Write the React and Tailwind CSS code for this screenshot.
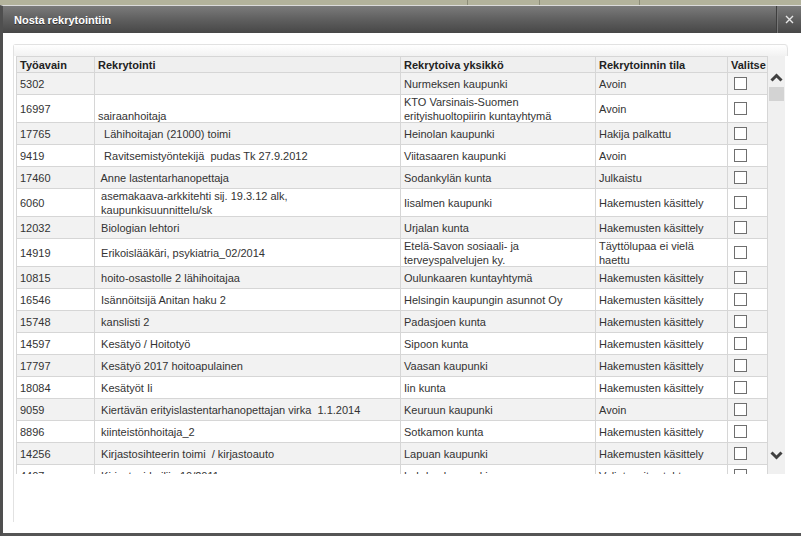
const rows = [
  ["5302", "", "Nurmeksen kaupunki", "Avoin"],
  ["16997", "\nsairaanhoitaja", "KTO Varsinais-Suomen\nerityishuoltopiirin kuntayhtymä", "Avoin", true],
  ["17765", "  Lähihoitajan (21000) toimi", "Heinolan kaupunki", "Hakija palkattu"],
  ["9419", "  Ravitsemistyöntekijä  pudas Tk 27.9.2012", "Viitasaaren kaupunki", "Avoin"],
  ["17460", " Anne lastentarhanopettaja", "Sodankylän kunta", "Julkaistu"],
  ["6060", " asemakaava-arkkitehti sij. 19.3.12 alk,\n kaupunkisuunnittelu/sk", "Iisalmen kaupunki", "Hakemusten käsittely", true],
  ["12032", " Biologian lehtori", "Urjalan kunta", "Hakemusten käsittely"],
  ["14919", " Erikoislääkäri, psykiatria_02/2014", "Etelä-Savon sosiaali- ja\nterveyspalvelujen ky.", "Täyttölupaa ei vielä\nhaettu", true],
  ["10815", " hoito-osastolle 2 lähihoitajaa", "Oulunkaaren kuntayhtymä", "Hakemusten käsittely"],
  ["16546", " Isännöitsijä Anitan haku 2", "Helsingin kaupungin asunnot Oy", "Hakemusten käsittely"],
  ["15748", " kanslisti 2", "Padasjoen kunta", "Hakemusten käsittely"],
  ["14597", " Kesätyö / Hoitotyö", "Sipoon kunta", "Hakemusten käsittely"],
  ["17797", " Kesätyö 2017 hoitoapulainen", "Vaasan kaupunki", "Hakemusten käsittely"],
  ["18084", " Kesätyöt Ii", "Iin kunta", "Hakemusten käsittely"],
  ["9059", " Kiertävän erityislastentarhanopettajan virka  1.1.2014", "Keuruun kaupunki", "Avoin"],
  ["8896", " kiinteistönhoitaja_2", "Sotkamon kunta", "Hakemusten käsittely"],
  ["14256", " Kirjastosihteerin toimi  / kirjastoauto", "Lapuan kaupunki", "Hakemusten käsittely"],
  ["4407", " Kirjastovirkailija 10/2011", "Lohden kaupunki", "Valintaesitys tehty"],
];

function Cell({ w, children, last }) {
  return (
    <div className={`${w} shrink-0 flex items-center pl-[3px] whitespace-pre overflow-hidden ${last ? "" : "border-r border-[#d6d6d6]"}`}>
      {children}
    </div>
  );
}

function Chevron({ up }) {
  return (
    <svg width="13" height="9" viewBox="0 0 13 9">
      <polyline
        points={up ? "1.5,7.5 6.5,2.5 11.5,7.5" : "1.5,1.5 6.5,6.5 11.5,1.5"}
        fill="none"
        stroke="#404040"
        strokeWidth="3"
      />
    </svg>
  );
}

export default function App() {
  return (
    <div className="w-[801px] h-[536px] overflow-hidden bg-[#b3b39c] font-['Liberation_Sans',Arial,sans-serif] text-[11px] leading-[14px] text-[#333]">
      {/* page behind the dialog */}
      <div className="h-[5px] flex">
        <div className="w-[468px] border-r border-[#8c8c78]" />
        <div className="w-[72px] border-r border-[#8c8c78]" />
        <div className="w-[100px] border-r border-[#8c8c78]" />
      </div>

      {/* dialog */}
      <div className="h-[531px] flex flex-col bg-white border-t border-t-[#dcdcdc] border-l-[3px] border-l-[#4f4f4f] border-b-[3px] border-b-[#555]">
        <div className="h-[27px] shrink-0 flex items-stretch bg-gradient-to-b from-[#7b7b7b] via-[#5f5f5f] to-[#474747]">
          <div className="flex-1 flex items-center pl-[11px] text-white font-bold text-[11px] [text-shadow:0_1px_0_#333]">
            Nosta rekrytointiin
          </div>
          <div className="w-[25px] border-l border-[#3e3e3e] shadow-[inset_1px_0_0_#777] flex items-center justify-center">
            <svg width="9" height="9" viewBox="0 0 9 9">
              <path d="M1 1 L8 8 M8 1 L1 8" stroke="#e8e8e8" strokeWidth="1.4" />
            </svg>
          </div>
        </div>

        <div className="flex-1 pt-[11px] pl-[10px]">
          <div className="w-[775px] h-[478px] border-l border-t border-[#e2e2e2] rounded-tl-[3px] rounded-tr-[4px] flex flex-col">
            <div className="h-[11px] shrink-0 bg-gradient-to-b from-white to-[#f2f2f2] border-r border-[#e2e2e2] rounded-tr-[4px]" />
            <div className="h-[418px] shrink-0 pl-[2px] flex overflow-hidden">
              <div className="w-[752px] shrink-0">
                <div className="h-[17px] flex bg-[#efefef] border-y border-l border-r border-[#d6d6d6] font-bold text-[#222]">
                  <Cell w="w-[78px]">Työavain</Cell>
                  <Cell w="w-[306px]">Rekrytointi</Cell>
                  <Cell w="w-[195px]">Rekrytoiva yksikkö</Cell>
                  <Cell w="w-[132px]">Rekrytoinnin tila</Cell>
                  <Cell w="flex-1" last>Valitse</Cell>
                </div>
                {rows.map((r, i) => (
                  <div
                    key={r[0]}
                    className={`${r[4] ? "h-[28px]" : "h-[22px]"} flex border-b border-l border-r border-[#d6d6d6] ${i % 2 === 0 ? "bg-[#f2f2f2]" : "bg-white"}`}
                  >
                    <Cell w="w-[78px]">{r[0]}</Cell>
                    <Cell w="w-[306px]">{r[1]}</Cell>
                    <Cell w="w-[195px]">{r[2]}</Cell>
                    <Cell w="w-[132px]">{r[3]}</Cell>
                    <Cell w="flex-1" last>
                      <div className="ml-[3px] w-[13px] h-[13px] border border-[#6f6f6f] bg-white" />
                    </Cell>
                  </div>
                ))}
              </div>
              <div className="w-[17px] shrink-0 bg-[#f0f0f0] flex flex-col items-center">
                <div className="mt-[17px]">
                  <Chevron up />
                </div>
                <div className="mt-[5px] w-[15px] h-[14px] bg-[#d3d3d3]" />
                <div className="mt-[350px]">
                  <Chevron />
                </div>
              </div>
            </div>
          </div>
        </div>
      </div>
    </div>
  );
}
